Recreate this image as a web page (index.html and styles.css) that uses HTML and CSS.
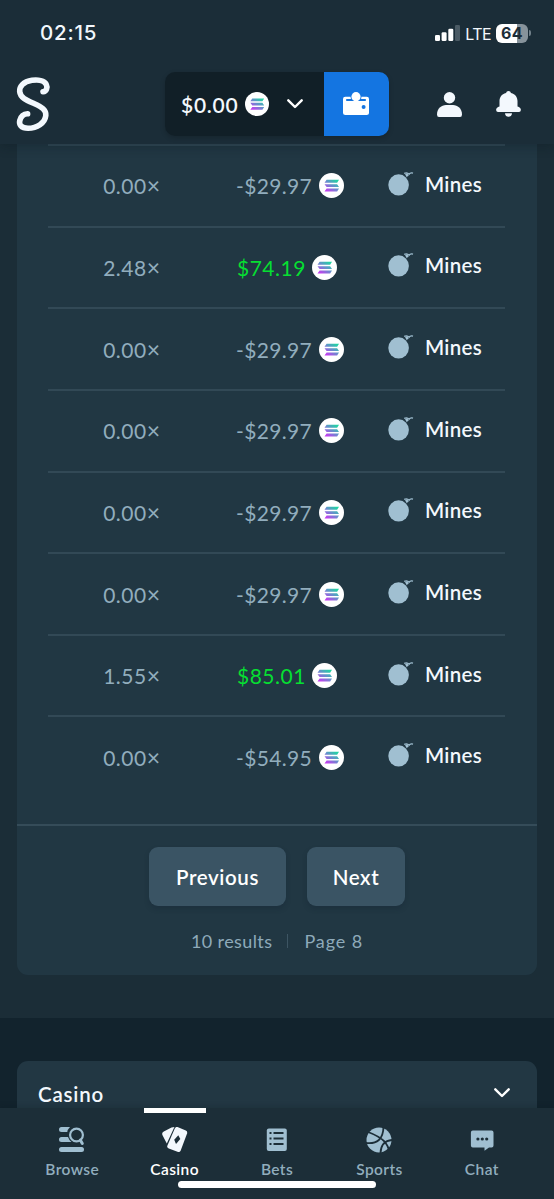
FILE: index.html
```
<!DOCTYPE html>
<html lang="en">
<head>
<meta charset="utf-8">
<title>Bets</title>
<link rel="stylesheet" href="styles.css">
</head>
<body>
<svg width="0" height="0" class="defs">
  <defs>
    <linearGradient id="sol" x1="1" y1="0" x2="0.1" y2="1">
      <stop offset="0.1" stop-color="#20d5a2"/><stop offset="0.5" stop-color="#6590cb"/><stop offset="0.95" stop-color="#c43df0"/>
    </linearGradient>
    <symbol id="coin" viewBox="0 0 24 24">
      <circle cx="12" cy="12" r="12" fill="#fff"/>
      <path fill="url(#sol)" d="M7.3 6.4H19.200L17.4 9.3H5.3zM5.300 10.700H17.400L19.200 13.500H7.3zM7.3 14.900H19.200L17.4 17.800H5.3z"/>
    </symbol>
    <symbol id="bomb" viewBox="0 0 26 24">
      <ellipse cx="10.6" cy="12.9" rx="10.3" ry="10.6" fill="#a0bfd1"/>
      <path d="M17.800 3.600L20 2.400" fill="none" stroke="#a0bfd1" stroke-width="3"/>
      <path d="M16.2 1.300Q19.500.200 21 2.200Q22.500.300 25 1.200" fill="none" stroke="#a0bfd1" stroke-width="1.4"/>
    </symbol>
    <symbol id="chevron" viewBox="0 0 16 10">
      <path d="M1.3 1.3L8 8L14.7 1.3" fill="none" stroke="#fff" stroke-width="2.4" stroke-linecap="round" stroke-linejoin="round"/>
    </symbol>
  </defs>
</svg>
<div class="app">
  <header class="header">
    <div class="status">
      <span class="clock">02:15</span>
      <div class="signals">
        <svg width="25" height="16" viewBox="0 0 25 16" fill="#fff"><rect y="10" width="5" height="6" rx="1.3"/><rect x="6.6" y="7.2" width="5" height="8.8" rx="1.3"/><rect x="13.3" y="3.8" width="5" height="12.2" rx="1.3"/><rect x="20" y="0" width="5" height="16" rx="1.3" fill="#4b5b65"/></svg>
        <span class="lte">LTE</span>
        <span class="battery">64</span><span class="battery-tip"></span>
      </div>
    </div>
    <div class="topbar">
      <svg class="logo" width="36" height="56" viewBox="15 76 36 56"><path d="M43 91.800C46.500 91.500 47.800 87.500 46.300 84.500C44.500 80.500 38 79.500 32 80.300C23 81.500 19.300 87 19.700 91.500C20.300 98 27 100.500 34 103.500C42 107 46.300 110 45.800 115.500C45 123 37 128.300 28 128.300C21 128.300 18.800 124.500 19.800 120.500C20.800 116.500 24 114 27.600 113.800" fill="none" stroke="#f3f8fd" stroke-width="5.600" stroke-linecap="round"/></svg>
      <div class="wallet">
        <div class="balance"><span>$0.00</span><svg class="coin" width="24" height="24"><use href="#coin"/></svg><svg class="chev" width="16" height="10"><use href="#chevron"/></svg></div>
        <div class="wallet-btn"><svg width="26" height="24" viewBox="0 0 26 24"><path d="M0 7Q0 4.700 2.300 4.700H23.700Q26 4.700 26 7V20.500Q26 23 23.500 23H2.500Q0 23 0 20.500z" fill="#fff"/><path d="M3.200 7H22.800V9H3.200z" fill="#1475e1"/><circle cx="13" cy="4.700" r="5.500" fill="#1475e1"/><circle cx="13" cy="4.700" r="4.600" fill="#fff"/><path d="M0 9H26V11H0z" fill="#fff"/><circle cx="20.600" cy="15" r="2" fill="#1475e1"/></svg></div>
      </div>
      <svg class="user" width="25" height="25" viewBox="0 0 25 25" fill="#f3f8fd"><circle cx="12.500" cy="5.700" r="5.700"/><path d="M0 22.500C0 16.500 4.500 13 9 13H16C20.500 13 25 16.500 25 22.500Q25 25 23 25H2Q0 25 0 22.500z"/></svg>
      <svg class="bell" width="25" height="26" viewBox="0 0 25 26" fill="#f3f8fd"><path d="M12.500 0Q14.500 0 15 2C19.500 3 21.500 6.500 21.500 10V15.500Q24.900 16.500 24.900 19Q24.700 21 23 21H2Q.3 21 .1 19Q.1 16.500 3.500 15.500V10C3.500 6.500 5.500 3 10 2Q10.500 0 12.500 0zM9 22.300H16C16 27 9 27 9 22.300z"/></svg>
    </div>
  </header>
  <main class="content">
    <section class="panel">
      <div class="rows">
        <div class="row"><span class="mult">0.00<b>×</b></span><span class="pay">-$29.97<svg class="coin" width="25" height="25"><use href="#coin"/></svg></span><span class="game"><svg width="26" height="24"><use href="#bomb"/></svg>Mines</span></div>
        <div class="row"><span class="mult">2.48<b>×</b></span><span class="pay win">$74.19<svg class="coin" width="25" height="25"><use href="#coin"/></svg></span><span class="game"><svg width="26" height="24"><use href="#bomb"/></svg>Mines</span></div>
        <div class="row"><span class="mult">0.00<b>×</b></span><span class="pay">-$29.97<svg class="coin" width="25" height="25"><use href="#coin"/></svg></span><span class="game"><svg width="26" height="24"><use href="#bomb"/></svg>Mines</span></div>
        <div class="row"><span class="mult">0.00<b>×</b></span><span class="pay">-$29.97<svg class="coin" width="25" height="25"><use href="#coin"/></svg></span><span class="game"><svg width="26" height="24"><use href="#bomb"/></svg>Mines</span></div>
        <div class="row"><span class="mult">0.00<b>×</b></span><span class="pay">-$29.97<svg class="coin" width="25" height="25"><use href="#coin"/></svg></span><span class="game"><svg width="26" height="24"><use href="#bomb"/></svg>Mines</span></div>
        <div class="row"><span class="mult">0.00<b>×</b></span><span class="pay">-$29.97<svg class="coin" width="25" height="25"><use href="#coin"/></svg></span><span class="game"><svg width="26" height="24"><use href="#bomb"/></svg>Mines</span></div>
        <div class="row"><span class="mult">1.55<b>×</b></span><span class="pay win">$85.01<svg class="coin" width="25" height="25"><use href="#coin"/></svg></span><span class="game"><svg width="26" height="24"><use href="#bomb"/></svg>Mines</span></div>
        <div class="row"><span class="mult">0.00<b>×</b></span><span class="pay">-$54.95<svg class="coin" width="25" height="25"><use href="#coin"/></svg></span><span class="game"><svg width="26" height="24"><use href="#bomb"/></svg>Mines</span></div>
      </div>
      <div class="pager">
        <div class="buttons"><button class="btn prev">Previous</button><button class="btn next">Next</button></div>
        <div class="summary"><span>10 results</span><i class="sep"></i><span class="page">Page 8</span></div>
      </div>
    </section>
  </main>
  <footer class="footer">
    <div class="accordion"><span>Casino</span><svg width="16" height="10"><use href="#chevron"/></svg></div>
  </footer>
  <nav class="nav">
    <a class="tab"><svg width="26" height="26" viewBox="0 0 26 26"><path d="M2.500 0H11Q8.500 2.500 8.300 5H2.500Q0 5 0 2.500T2.500 0zM2.500 10H9Q10 13 12.500 15H2.500Q0 15 0 12.500T2.500 10z" fill="#a0bfd1"/><rect y="20" width="25" height="5" rx="2.500" fill="#a0bfd1"/><circle cx="17.500" cy="8" r="6.400" fill="none" stroke="#a0bfd1" stroke-width="2.200"/><path d="M21.300 13L23.300 16.500" stroke="#a0bfd1" stroke-width="3" stroke-linecap="round"/></svg><span>Browse</span></a>
    <a class="tab active"><svg width="26" height="26" viewBox="0 0 26 26" fill="#f3f8fd"><path d="M9.500.5L12.500 0L11.500 2L4.800 16.500L.4 8Q-.5 5.800 1.800 4.500z"/><path d="M12.800 1.400Q13.800-.5 15.500.1L23.800 3.600Q25.800 4.600 25 6.800L18.700 23.500Q17.800 25.600 15.500 24.800L6.800 21.500Q4.600 20.500 5.500 18.200z"/><path d="M16.300 8.200L18.300 12L14 17L12.200 12.800z" fill="#1c2e38"/></svg><span>Casino</span></a>
    <a class="tab"><svg width="26" height="26" viewBox="0 0 26 26"><rect x="2.800" y="1.400" width="20" height="22.600" rx="2" fill="#a0bfd1"/><path d="M5.500 6h2M5.500 11.500h2M5.500 17h2M9.500 6h10M9.500 11.500h10M9.500 17h10" stroke="#1c2e38" stroke-width="2"/></svg><span>Bets</span></a>
    <a class="tab"><svg width="26" height="26" viewBox="0 0 26 26"><circle cx="13" cy="13" r="12.500" fill="#a0bfd1"/><path d="M2 5Q13 9 19 15Q22 19 23 23M0 16Q17 18 17.500 0M26 13Q15 14 14.500 26" fill="none" stroke="#1c2e38" stroke-width="1.800"/></svg><span>Sports</span></a>
    <a class="tab"><svg width="26" height="26" viewBox="0 0 26 26"><path d="M3.800 3.500H22.600Q24.500 3.500 24.500 5.400V18.600Q24.500 20.500 22.600 20.500H20L15.500 23.700V20.500H3.800Q1.900 20.500 1.900 18.600V5.400Q1.900 3.500 3.800 3.500z" fill="#a0bfd1"/><g fill="#1c2e38"><circle cx="8.900" cy="12" r="1.600"/><circle cx="13.300" cy="12" r="1.600"/><circle cx="17.700" cy="12" r="1.600"/></g></svg><span>Chat</span></a>
    <div class="home"></div>
  </nav>
</div>
</body>
</html>
```
FILE: styles.css
```
* { box-sizing: border-box; }
body { margin: 0; background: #1b2d37; font-family: Lato, sans-serif; color: #f3f8fd; }
.defs { position: absolute; }
svg { flex: none; display: block; }
.app { width: 554px; height: 1199px; display: flex; flex-direction: column; overflow: hidden; }
.header { height: 144px; flex: none; background: #1b2d38; box-shadow: 0 3px 10px rgba(10,22,30,.3); position: relative; z-index: 1; }
.status { height: 66px; display: flex; justify-content: space-between; padding: 0 25px 0 40px; align-items: center; }
.clock { font: 500 20.5px/24px Inter, sans-serif; letter-spacing: .8px; }
.signals { display: flex; align-items: center; }
.lte { font: 400 16px/20px Inter, sans-serif; margin: 1px 5px 0 5px; letter-spacing: -.6px; }
.battery { width: 32px; height: 19px; border-radius: 6px; background: linear-gradient(90deg, #fff 65%, #87939b 65%); color: #1c2d38; font: 700 16px/19px Inter, sans-serif; text-align: center; letter-spacing: .3px; }
.battery-tip { width: 2px; height: 6px; margin: 0 -2px 0 1px; border-radius: 0 2px 2px 0; background: #71808a; }
.topbar { display: flex; align-items: center; height: 76px; padding-left: 15px; }
.wallet { display: flex; width: 224px; height: 64px; margin-left: 114px; border-radius: 10px; overflow: hidden; box-shadow: 0 2px 5px rgba(0,0,0,.18); }
.balance { display: flex; align-items: center; width: 159px; background: #111f27; padding-left: 16px; font-weight: 600; font-size: 21px; letter-spacing: .75px; }
.balance .coin { margin-left: 7px; }
.chev { margin-left: 18px; }
.balance span { width: 57px; }
.wallet-btn { flex: 1; background: #1475e1; display: flex; align-items: center; justify-content: center; }
.wallet-btn svg { margin-right: 2px; }
.user { margin-left: 48px; }
.bell { margin-left: 34px; }
.content { height: 874px; flex: none; padding: 0 17px; }
.panel { height: 831px; background: #213743; border-radius: 0 0 11px 11px; }
.rows { height: 680px; padding: 0 32px 0 31px; }
.row { display: grid; grid-template-columns: 112px 228px 1fr; height: 81.650px; align-items: center; border-top: 2px solid #324956; font-size: 21px; color: #91adbd; letter-spacing: .5px; }
.mult { text-align: right; }
.mult b { font-weight: 400; font-size: 23px; line-height: 20px; letter-spacing: 0; }
.pay { padding-left: 76px; display: flex; align-items: center; letter-spacing: .35px; }
.pay .coin { margin-left: 6.500px; }
.win { color: #06df32; letter-spacing: .5px; padding-left: 77px; }
.win .coin { margin-left: 6px; }
.game { display: flex; align-items: center; gap: 11px; font-size: 20.500px; font-weight: 600; color: #f3f8fd; letter-spacing: .3px; padding-bottom: 4px; }
.pager { border-top: 2px solid #354c59; padding-top: 21px; }
.buttons { display: flex; justify-content: center; gap: 21px; }
.btn { height: 59px; border: 0; border-radius: 9px; padding: 0; background: #3a5464; box-shadow: 0 3px 5px rgba(15,33,46,.25); color: #fff; font: 600 20.500px/60px Lato, sans-serif; letter-spacing: .6px; }
.prev { width: 137px; }
.next { width: 98px; }
.summary { display: flex; justify-content: center; align-items: center; margin-top: 23px; font-size: 18px; line-height: 24px; color: #8eaaba; letter-spacing: .4px; }
.sep { width: 1px; height: 14px; margin: 0 16px 0 15px; background: #3d5563; }
.page { letter-spacing: .9px; }
.footer { height: 90px; flex: none; background: #12232d; padding: 43px 17px 0; }
.accordion { height: 47px; border-radius: 11px 11px 0 0; background: #223743; display: flex; justify-content: space-between; align-items: flex-start; padding: 20px 27px 0 21px; font-weight: 600; font-size: 20.500px; line-height: 26px; letter-spacing: .8px; }
.accordion svg { margin-top: 7px; }
.nav { position: relative; height: 91px; flex: none; background: #1c2e38; display: flex; padding: 0 21px 0 21px; box-shadow: 0 -2px 5px rgba(10,22,30,.15); }
.tab { flex: 1; position: relative; display: flex; flex-direction: column; align-items: center; padding-top: 19px; font-weight: 600; font-size: 15.500px; line-height: 20px; color: #91adbd; letter-spacing: .4px; }
.tab span { margin-top: 6px; }
.active { color: #fff; }
.active::before { content: ""; position: absolute; top: 0; width: 62px; height: 5px; background: #fff; }
.home { position: absolute; left: 178px; top: 73px; width: 198px; height: 7px; border-radius: 4px; background: #fff; }
```
